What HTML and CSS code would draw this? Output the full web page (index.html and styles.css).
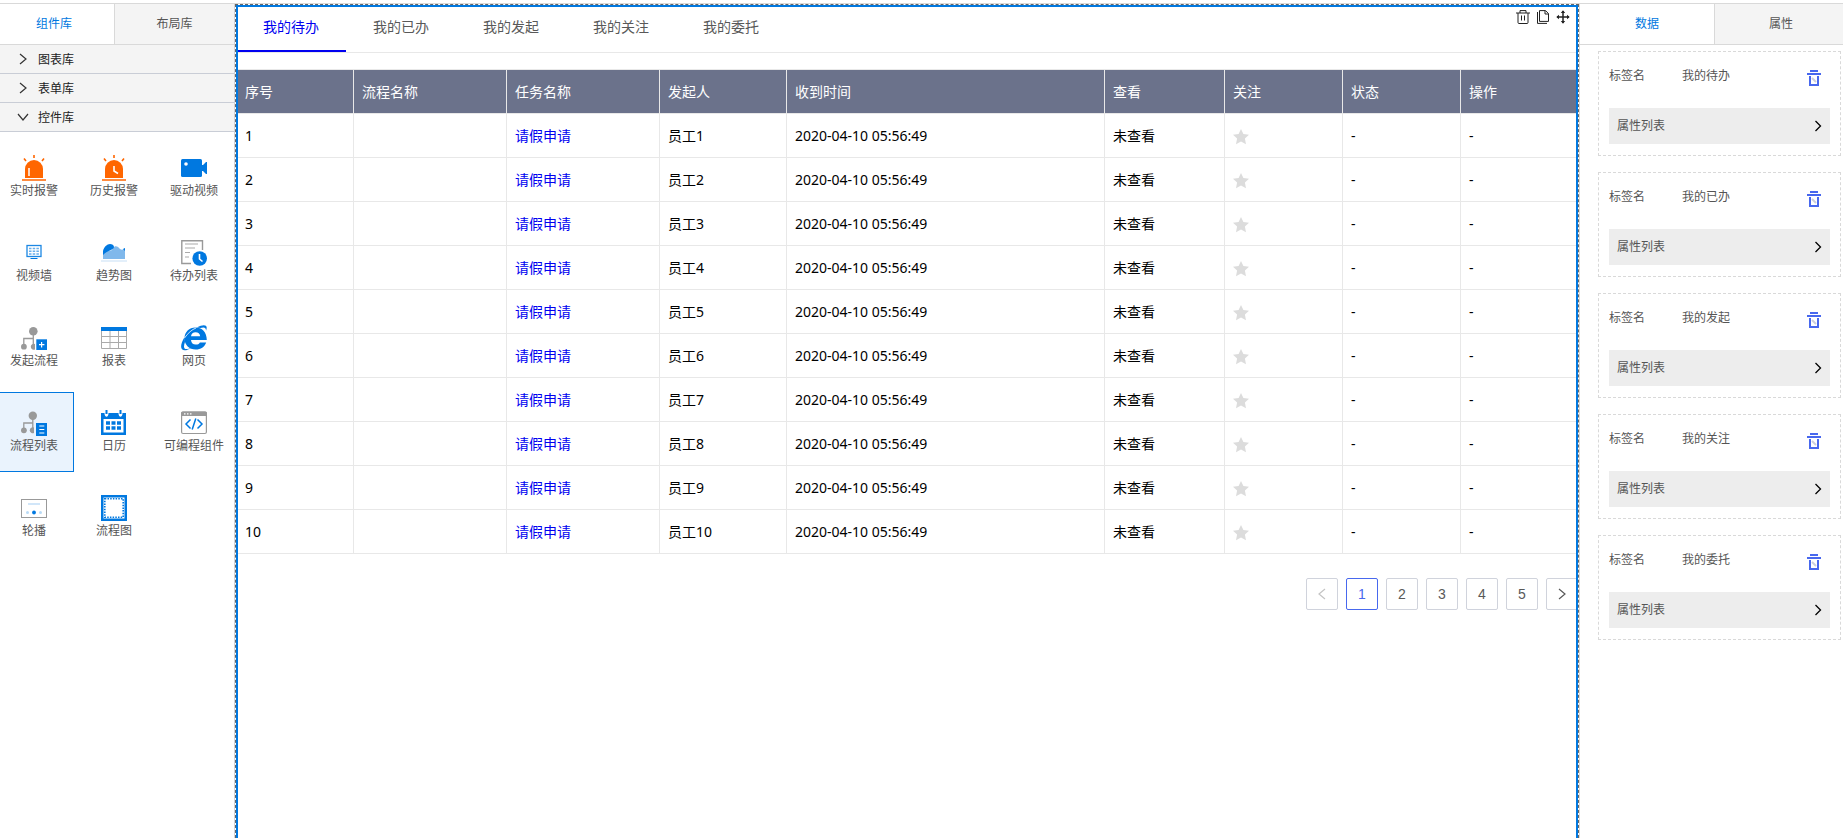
FILE: index.html
```html
<!DOCTYPE html>
<html lang="zh-CN">
<head>
<meta charset="utf-8">
<title>流程列表</title>
<link rel="stylesheet" href="styles.css">
</head>
<body>
<svg class="defs" aria-hidden="true">
  <symbol id="star" viewBox="0 0 16 16"><path d="M8 0l2.4 5.1 5.6.7-4.1 3.8 1.1 5.6L8 12.500 3 15.200l1.100-5.600L0 5.800l5.600-.7z" fill="#dcdcdc"/></symbol>
  <symbol id="right" viewBox="0 0 8 12"><path d="M1.500 1l5 5-5 5" fill="none" stroke="currentColor" stroke-width="1.300"/></symbol>
  <symbol id="bin" viewBox="0 0 14 16"><path d="M3 1h8M0 4h14M3 6v9h8V6" fill="none" stroke="#4868ee" stroke-width="2"/><path d="M5 8l4 4" stroke="#cdd0dc" stroke-width="2"/></symbol>
</svg>
<div class="editor">
  <aside class="library">
    <div class="panel-tabs" role="tablist">
      <button class="panel-tab active" role="tab">组件库</button>
      <button class="panel-tab" role="tab">布局库</button>
    </div>
    <button class="group"><svg class="group-icon" viewBox="0 0 10 10"><path d="M2 0l6 5-6 5"/></svg>图表库</button>
    <button class="group"><svg class="group-icon" viewBox="0 0 10 10"><path d="M2 0l6 5-6 5"/></svg>表单库</button>
    <button class="group"><svg class="group-icon" viewBox="0 0 10 10"><path d="M0 2l5 6 5-6"/></svg>控件库</button>
    <div class="widgets">
      <button class="widget"><svg viewBox="0 0 26 26"><path d="M4 23V14a9 9 0 0 1 18 0v9z" fill="#ff6600"/><path d="M1 25h24M13 0v3M3 3.500l2 2.500M23 3.500L21 6" stroke="#ff6600" stroke-width="1.600"/><path d="M8 13v8" stroke="#fff" stroke-width="1.500"/></svg>实时报警</button>
      <button class="widget"><svg viewBox="0 0 26 26"><path d="M4 23V14a9 9 0 0 1 18 0v9z" fill="#ff6600"/><path d="M1 25h24M13 0v3M3 3.500l2 2.500M23 3.500L21 6" stroke="#ff6600" stroke-width="1.600"/><path d="M13 11v5l4 2.500" fill="none" stroke="#fff" stroke-width="1.600"/></svg>历史报警</button>
      <button class="widget"><svg viewBox="0 0 26 26"><rect y="4" width="21" height="18" rx="1.500" fill="#0078e0"/><path d="M20 10h2l3-3h1v12h-1l-3-3h-2z" fill="#0078e0"/><circle cx="5" cy="9" r="1.800" fill="#fff"/></svg>驱动视频</button>
      <button class="widget"><svg viewBox="0 0 26 26"><rect x="6" y="5.500" width="14" height="11" fill="none" stroke="#1c87e3" stroke-width="1.300"/><path d="M8 8.500h10M8 11.200h10M8 14h10" stroke="#69afeb" stroke-width="1.400" stroke-dasharray="2.500 1.200"/><path d="M9.500 18.500h7" stroke="#0078e0"/></svg>视频墙</button>
      <button class="widget"><svg viewBox="0 0 26 26"><path d="M2 19V13C5 7 10 14 12 8c2-3 5-2 7 1 2 1 3 1 5-1v11z" fill="#80b8eb"/><path d="M2 15V11C3 7 6 4 9 4c2 0 4 1 4 3 0 3-6 3-11 8zM22 9l2-1v3z" fill="#0078e0"/><path d="M0 21h26" stroke="#dcebf9" stroke-width="1.600"/></svg>趋势图</button>
      <button class="widget"><svg viewBox="0 0 26 26"><path d="M10 23.500H.8V.8h20.700V10" fill="none" stroke="#999" stroke-width="1.400"/><path d="M4 4h13M4 8h10M4 12.500h5M4 17h4" stroke="#aaa" stroke-width="1.200"/><circle cx="18.700" cy="18.500" r="7.300" fill="#0078e0"/><path d="M18.500 14v5l3 2.500" fill="none" stroke="#fff" stroke-width="1.600"/></svg>待办列表</button>
      <button class="widget"><svg viewBox="0 0 26 26"><g fill="#999"><circle cx="12.300" cy="6.200" r="4.300"/><circle cx="2.900" cy="21.700" r="2.900"/><path d="M14 19a3 3 0 1 0 0 5.500z"/></g><path d="M2.800 20v-6.500h9.400M12.300 9v12" fill="none" stroke="#999" stroke-width="1.300"/><rect x="15.300" y="14.300" width="10.700" height="10.700" fill="#0078e0"/><path d="M20.600 17v5.400M18 19.700h5.400" stroke="#fff" stroke-width="1.200"/></svg>发起流程</button>
      <button class="widget"><svg viewBox="0 0 26 26"><path d="M.5 4v19.500h25V4M0 11.500h26M0 17.500h26M9 5v18M17.500 5v18" fill="none" stroke="#aaa"/><path d="M0 2h26v4H0z" fill="#0078e0"/></svg>报表</button>
      <button class="widget"><svg viewBox="0 0 26 26"><path fill-rule="evenodd" d="M14.500 2.500c6.500 0 11.300 4.600 11.300 12.500H10c.3 3 2 4.600 4.700 4.600 2 0 3.400-.7 4.200-2.200h6.300C23.600 21.800 19.800 24.500 14.700 24.500 8.300 24.500 3.500 20 3.500 13.500S8.200 2.500 14.500 2.500zM10 11.200h9.200c-.3-2.500-2-3.900-4.600-3.900s-4.200 1.500-4.600 3.900z" fill="#0078e0"/><path d="M16 2.600C21-.2 25.500-.6 25.700 2.600c0 1.100-.2 2-.7 3.200.2-3-1.600-4.100-5.600-2.700zM3.600 12C.2 17.500-.8 22.300 1 24.300c2 2 6 .7 9.500-1.600-3.300 1.300-5.800 1.700-6.900.7-1-1-.7-3.200.4-6.400z" fill="#0078e0"/><path d="M3.500 13C7 8 11 4.500 15 3" fill="none" stroke="#fff" stroke-width=".8"/></svg>网页</button>
      <button class="widget selected"><svg viewBox="0 0 26 26"><g fill="#999"><circle cx="11.800" cy="5.700" r="4.200"/><circle cx="2.900" cy="20.300" r="2.900"/><path d="M13 17.500a3 3 0 1 0 0 5.500z"/></g><path d="M2.800 18v-5h9M11.800 9v11" fill="none" stroke="#999" stroke-width="1.300"/><rect x="15" y="13" width="11" height="13" fill="#0078e0"/><path d="M18.300 16h5M18.300 19.500h5M18.300 23h5" stroke="#fff" stroke-width="1.200"/></svg>流程列表</button>
      <button class="widget"><svg viewBox="0 0 26 26"><path d="M0 3h3.500c0 5 4 5 4 0h10c0 5 4 5 4 0H25v22H0z" fill="#0078e0"/><path d="M5.500 0v4M19.500 0v4" stroke="#0078e0" stroke-width="2"/><path d="M2.500 9h20v13.500h-20z" fill="#fff"/><path d="M5 13h15M5 18h15" stroke="#0078e0" stroke-width="3.400" stroke-dasharray="4 1.500"/></svg>日历</button>
      <button class="widget"><svg viewBox="0 0 26 26"><rect x=".6" y="2" width="24.800" height="21.500" rx="1.500" fill="#fff" stroke="#999" stroke-width="1.200"/><path d="M0 6V3q0-1.500 1.500-1.500h23Q26 1.500 26 3v3z" fill="#999"/><path d="M3 3.800h9" stroke="#fff" stroke-width="1.300" stroke-dasharray="1.500 1.500"/><path d="M9.500 9.500L5 14l4.500 4.500M16.500 9.500L21 14l-4.500 4.500M14.800 8.500l-3.600 11" fill="none" stroke="#0078e0" stroke-width="1.500"/></svg>可编程组件</button>
      <button class="widget"><svg viewBox="0 0 26 26"><rect x=".5" y="4.500" width="25" height="18" fill="#fff" stroke="#999"/><path d="M7 9h12" stroke="#bedcf6" stroke-width="1.400"/><circle cx="13" cy="17.500" r="1.900" fill="#0078e0"/><g fill="#b9daf6"><circle cx="6.500" cy="17.500" r="1.500"/><circle cx="19.500" cy="17.500" r="1.500"/></g></svg>轮播</button>
      <button class="widget"><svg viewBox="0 0 26 26"><path d="M0 0h26v26H0z" fill="#0078e0"/><path d="M2.500 2.500h21v21h-21z" fill="#fff"/><rect x="3.800" y="3.800" width="18.400" height="18.400" fill="none" stroke="#0078e0" stroke-width="1.600" stroke-dasharray="1.500 1.200"/></svg>流程图</button>
    </div>
  </aside>

  <main class="canvas">
    <div class="tools">
      <button aria-label="删除"><svg viewBox="0 0 14 14"><path d="M0 3h14M4 3V.6h6V3M2 3v9.500q0 1 1 1h8q1 0 1-1V3M5.500 5.500v5M8.500 5.500v5"/></svg></button>
      <button aria-label="复制"><svg viewBox="0 0 14 14"><path d="M3.500.6h6l3 3v7.800h-9zM9 .6V4h3.500M1.500 2v11.400H11"/></svg></button>
      <button aria-label="移动"><svg viewBox="0 0 14 14"><path d="M7 1v12M1 7h12" stroke-width="1.500"/><path d="M4.800 3L7 .3 9.200 3zM4.800 11L7 13.700 9.200 11zM3 4.800L.3 7 3 9.200zM11 4.800L13.700 7 11 9.200z" fill="#222" stroke="none"/></svg></button>
    </div>
    <div class="list-tabs" role="tablist">
      <button class="list-tab active" role="tab">我的待办</button>
      <button class="list-tab" role="tab">我的已办</button>
      <button class="list-tab" role="tab">我的发起</button>
      <button class="list-tab" role="tab">我的关注</button>
      <button class="list-tab" role="tab">我的委托</button>
    </div>
    <table class="tasks">
      <colgroup><col class="c-index"><col class="c-name"><col class="c-name"><col class="c-user"><col><col class="c-view"><col class="c-index"><col class="c-index"><col class="c-action"></colgroup>
      <thead><tr><th>序号</th><th>流程名称</th><th>任务名称</th><th>发起人</th><th>收到时间</th><th>查看</th><th>关注</th><th>状态</th><th>操作</th></tr></thead>
      <tbody>
        <tr><td>1</td><td></td><td><a href="#">请假申请</a></td><td>员工1</td><td>2020-04-10 05:56:49</td><td>未查看</td><td><button class="star" aria-label="关注"><svg><use href="#star"/></svg></button></td><td>-</td><td>-</td></tr>
        <tr><td>2</td><td></td><td><a href="#">请假申请</a></td><td>员工2</td><td>2020-04-10 05:56:49</td><td>未查看</td><td><button class="star" aria-label="关注"><svg><use href="#star"/></svg></button></td><td>-</td><td>-</td></tr>
        <tr><td>3</td><td></td><td><a href="#">请假申请</a></td><td>员工3</td><td>2020-04-10 05:56:49</td><td>未查看</td><td><button class="star" aria-label="关注"><svg><use href="#star"/></svg></button></td><td>-</td><td>-</td></tr>
        <tr><td>4</td><td></td><td><a href="#">请假申请</a></td><td>员工4</td><td>2020-04-10 05:56:49</td><td>未查看</td><td><button class="star" aria-label="关注"><svg><use href="#star"/></svg></button></td><td>-</td><td>-</td></tr>
        <tr><td>5</td><td></td><td><a href="#">请假申请</a></td><td>员工5</td><td>2020-04-10 05:56:49</td><td>未查看</td><td><button class="star" aria-label="关注"><svg><use href="#star"/></svg></button></td><td>-</td><td>-</td></tr>
        <tr><td>6</td><td></td><td><a href="#">请假申请</a></td><td>员工6</td><td>2020-04-10 05:56:49</td><td>未查看</td><td><button class="star" aria-label="关注"><svg><use href="#star"/></svg></button></td><td>-</td><td>-</td></tr>
        <tr><td>7</td><td></td><td><a href="#">请假申请</a></td><td>员工7</td><td>2020-04-10 05:56:49</td><td>未查看</td><td><button class="star" aria-label="关注"><svg><use href="#star"/></svg></button></td><td>-</td><td>-</td></tr>
        <tr><td>8</td><td></td><td><a href="#">请假申请</a></td><td>员工8</td><td>2020-04-10 05:56:49</td><td>未查看</td><td><button class="star" aria-label="关注"><svg><use href="#star"/></svg></button></td><td>-</td><td>-</td></tr>
        <tr><td>9</td><td></td><td><a href="#">请假申请</a></td><td>员工9</td><td>2020-04-10 05:56:49</td><td>未查看</td><td><button class="star" aria-label="关注"><svg><use href="#star"/></svg></button></td><td>-</td><td>-</td></tr>
        <tr><td>10</td><td></td><td><a href="#">请假申请</a></td><td>员工10</td><td>2020-04-10 05:56:49</td><td>未查看</td><td><button class="star" aria-label="关注"><svg><use href="#star"/></svg></button></td><td>-</td><td>-</td></tr>
      </tbody>
    </table>
    <nav class="pages" aria-label="分页">
      <button class="page" disabled aria-label="上一页"><svg viewBox="0 0 8 10"><path d="M7 0L1 5l6 5"/></svg></button>
      <button class="page current">1</button>
      <button class="page">2</button>
      <button class="page">3</button>
      <button class="page">4</button>
      <button class="page">5</button>
      <button class="page" aria-label="下一页"><svg viewBox="0 0 8 10"><path d="M1 0l6 5-6 5"/></svg></button>
    </nav>
  </main>

  <aside class="settings">
    <div class="panel-tabs" role="tablist">
      <button class="panel-tab active" role="tab">数据</button>
      <button class="panel-tab" role="tab">属性</button>
    </div>
    <div class="cards">
      <section class="card"><div class="field"><label for="n1">标签名</label><input id="n1" value="我的待办"><button class="remove" aria-label="删除"><svg><use href="#bin"/></svg></button></div><button class="props">属性列表<svg><use href="#right"/></svg></button></section>
      <section class="card"><div class="field"><label for="n2">标签名</label><input id="n2" value="我的已办"><button class="remove" aria-label="删除"><svg><use href="#bin"/></svg></button></div><button class="props">属性列表<svg><use href="#right"/></svg></button></section>
      <section class="card"><div class="field"><label for="n3">标签名</label><input id="n3" value="我的发起"><button class="remove" aria-label="删除"><svg><use href="#bin"/></svg></button></div><button class="props">属性列表<svg><use href="#right"/></svg></button></section>
      <section class="card"><div class="field"><label for="n4">标签名</label><input id="n4" value="我的关注"><button class="remove" aria-label="删除"><svg><use href="#bin"/></svg></button></div><button class="props">属性列表<svg><use href="#right"/></svg></button></section>
      <section class="card"><div class="field"><label for="n5">标签名</label><input id="n5" value="我的委托"><button class="remove" aria-label="删除"><svg><use href="#bin"/></svg></button></div><button class="props">属性列表<svg><use href="#right"/></svg></button></section>
    </div>
  </aside>
</div>
</body>
</html>
```
FILE: styles.css
```css
* { box-sizing: border-box; }
body {
  margin: 0;
  padding-top: 3px;
  background: #fff;
  color: #555;
  font: 12px/18px "Noto Sans", "Noto Sans CJK SC", sans-serif;
}
button, input {
  margin: 0;
  padding: 0;
  border: 0;
  background: none;
  color: inherit;
  font: inherit;
}
button { cursor: pointer; }
svg { display: block; }
.defs { display: none; }

.editor {
  display: grid;
  grid-template-columns: 235px minmax(0, 1fr) 264px;
  min-height: calc(100vh - 3px);
  border-top: 1px solid #d9d9d9;
}
.library { border-right: 1px solid #d0d3d8; overflow: hidden; }
.settings { border-left: 1px solid #d9d9d9; }

.panel-tabs {
  display: flex;
  height: 41px;
  border-bottom: 1px solid #d9d9d9;
}
.panel-tab { flex: 1; background: #f4f4f4; }
.panel-tab.active {
  flex: 0 0 115px;
  padding-right: 6px;
  border-right: 1px solid #d9d9d9;
  background: #fff;
  color: #0078e0;
}
.settings .panel-tab { padding-left: 4px; }
.settings .panel-tab.active { flex-basis: 135px; padding: 0; }

.group {
  display: flex;
  align-items: center;
  gap: 10px;
  width: 100%;
  height: 29px;
  padding: 2px 0 0 18px;
  border-bottom: 1px solid #c9cdd6;
  background: #f4f4f4;
  color: #222;
}
.group-icon { width: 10px; height: 10px; margin-bottom: 3px; overflow: visible; fill: none; stroke: #333; stroke-width: 1.2; }

.widgets {
  display: grid;
  grid-template-columns: repeat(3, 80px);
  grid-auto-rows: 80px;
  row-gap: 5px;
  margin: 5px -6px 0;
}
.widget {
  display: flex;
  flex-direction: column;
  align-items: center;
  gap: 1px;
  padding-top: 17px;
  border: 1px solid transparent;
}
.widget svg { width: 26px; height: 26px; }
.widget.selected { border-color: #0078e0; background: #eaf3fd; }

.canvas {
  position: relative;
  border: 1px dashed #666;
  border-bottom: 0;
  color: #000;
  font-size: 14px;
  line-height: 22px;
  overflow: hidden;
}
.canvas::after {
  content: "";
  position: absolute;
  inset: 0;
  border: 2px solid #0078e0;
  border-bottom: 0;
  pointer-events: none;
}
.tools { position: absolute; top: 5px; right: 8px; display: flex; gap: 6px; }
.tools svg { width: 14px; height: 14px; fill: none; stroke: #222; }
.list-tabs { display: flex; height: 48px; border-bottom: 1px solid #e8e8e8; }
.list-tab { width: 110px; padding-bottom: 3px; color: #595959; }
.list-tab.active { border-bottom: 2px solid #0000f0; padding-bottom: 1px; color: #0000f0; }

.tasks {
  width: 100%;
  margin-top: 16px;
  border-collapse: separate;
  border-spacing: 0;
  border-top: 1px solid #e8e8e8;
  table-layout: fixed;
}
.c-index { width: 118px; }
.c-name { width: 153px; }
.c-user { width: 127px; }
.c-view { width: 120px; }
.c-action { width: 117px; }
.tasks th, .tasks td {
  height: 44px;
  padding: 0 8px;
  border: solid #e8e8e8;
  border-width: 0 1px 1px 0;
  text-align: left;
  font-weight: 400;
}
.tasks th { background: #6b728b; color: #fff; }
.tasks th:first-child, .tasks td:first-child { padding-left: 9px; }
.tasks a { color: #0000f0; text-decoration: none; }
.star { display: block; margin-top: 3px; }
.star svg { width: 16px; height: 16px; }

.pages {
  display: flex;
  justify-content: flex-end;
  gap: 8px;
  margin-top: 24px;
  font-family: "Liberation Sans", sans-serif;
}
.page {
  display: flex;
  align-items: center;
  justify-content: center;
  width: 32px;
  height: 32px;
  border: 1px solid #d0d3dc;
  border-radius: 2px;
  color: #595959;
}
.page.current { border-color: #4868ee; color: #4868ee; }
.page:disabled { color: #c4c4c4; }
.page svg { width: 8px; height: 10px; overflow: visible; fill: none; stroke: currentColor; stroke-width: 1.2; }

.cards {
  display: flex;
  flex-direction: column;
  gap: 16px;
  padding: 6px 2px 16px 18px;
}
.card { padding: 0 10px 11px; border: 1px dashed #d9d9d9; }
.field { display: flex; align-items: center; height: 48px; margin-bottom: 8px; }
.field label { flex: 0 0 73px; }
.field input { flex: 1; min-width: 0; }
.remove { margin: 4px 9px 0 0; }
.remove svg { width: 14px; height: 16px; }
.props {
  display: flex;
  align-items: center;
  justify-content: space-between;
  width: 100%;
  height: 36px;
  padding: 0 8px;
  background: #ededed;
}
.props svg { width: 8px; height: 12px; color: #000; }
```
